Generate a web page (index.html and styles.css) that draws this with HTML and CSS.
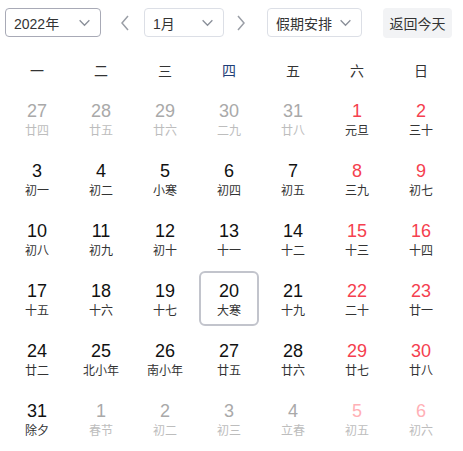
FILE: index.html
```html
<!DOCTYPE html>
<html lang="zh-CN">
<head>
    <meta charset="UTF-8">
    <title>万年历</title>
    <link rel="stylesheet" href="styles.css">
</head>
<body>
    <div class="toolbar">
        <div class="select select-year active">
            <span>2022年</span>
            <svg class="caret" viewBox="0 0 12 12"><path d="M1.5 4l4.5 4.5 4.5-4.5" /></svg>
        </div>
        <svg class="nav nav-prev" viewBox="0 0 14 18"><path d="M10 2L4 9l6 7" /></svg>
        <div class="select select-month">
            <span>1月</span>
            <svg class="caret" viewBox="0 0 12 12"><path d="M1.5 4l4.5 4.5 4.5-4.5" /></svg>
        </div>
        <svg class="nav nav-next" viewBox="0 0 14 18"><path d="M4 2l6 7-6 7" /></svg>
        <div class="select select-holiday">
            <span>假期安排</span>
            <svg class="caret" viewBox="0 0 12 12"><path d="M1.5 4l4.5 4.5 4.5-4.5" /></svg>
        </div>
        <button class="today-btn">返回今天</button>
    </div>

    <div class="weekdays">
        <div>一</div>
        <div>二</div>
        <div>三</div>
        <div class="current">四</div>
        <div>五</div>
        <div>六</div>
        <div>日</div>
    </div>

    <div id="days" class="days"></div>

    <script>
        const days = [
            [27, "廿四", "other"], [28, "廿五", "other"], [29, "廿六", "other"], [30, "二九", "other"], [31, "廿八", "other"], [1, "元旦", "rest"], [2, "三十", "rest"],
            [3, "初一"], [4, "初二"], [5, "小寒"], [6, "初四"], [7, "初五"], [8, "三九", "rest"], [9, "初七", "rest"],
            [10, "初八"], [11, "初九"], [12, "初十"], [13, "十一"], [14, "十二"], [15, "十三", "rest"], [16, "十四", "rest"],
            [17, "十五"], [18, "十六"], [19, "十七"], [20, "大寒", "today"], [21, "十九"], [22, "二十", "rest"], [23, "廿一", "rest"],
            [24, "廿二"], [25, "北小年"], [26, "南小年"], [27, "廿五"], [28, "廿六"], [29, "廿七", "rest"], [30, "廿八", "rest"],
            [31, "除夕"], [1, "春节", "other"], [2, "初二", "other"], [3, "初三", "other"], [4, "立春", "other"], [5, "初五", "other rest"], [6, "初六", "other rest"]
        ];

        const grid = document.getElementById("days");
        days.forEach(([num, lunar, cls]) => {
            const cell = document.createElement("div");
            cell.className = "day" + (cls ? " " + cls : "");
            cell.innerHTML = `<span class="num">${num}</span><span class="lunar">${lunar}</span>`;
            grid.appendChild(cell);
        });
    </script>
</body>
</html>
```

FILE: styles.css
```css
body {
    margin: 0;
    font-family: "Liberation Sans", "Noto Sans CJK SC", sans-serif;
    color: #1d2129;
    background: #fff;
}

.toolbar {
    display: flex;
    align-items: center;
    padding: 8px 0 0 5px;
    height: 29px;
}

.select {
    box-sizing: border-box;
    height: 29px;
    border: 1px solid #dcdfe6;
    border-radius: 4px;
    display: flex;
    align-items: center;
    justify-content: space-between;
    padding: 0 9px 0 8px;
    font-size: 14px;
    color: #333;
}

.select.active {
    border-color: #a8aab6;
}

.select-year {
    width: 96px;
}

.select-month {
    width: 80px;
}

.select-holiday {
    width: 95px;
}

.caret {
    width: 13px;
    height: 13px;
    fill: none;
    stroke: #8a8f99;
    stroke-width: 1.2;
}

.nav {
    width: 14px;
    height: 18px;
    fill: none;
    stroke: #9a9ea6;
    stroke-width: 1.5;
}

.nav-prev {
    margin: 0 12px 0 17px;
}

.nav-next {
    margin: 0 19px 0 10px;
}

.today-btn {
    margin-left: 21px;
    height: 30px;
    width: 69px;
    border: none;
    border-radius: 4px;
    background: #f2f3f5;
    font-family: inherit;
    font-size: 14px;
    color: #333;
    padding: 0;
}

.weekdays {
    display: grid;
    grid-template-columns: repeat(7, 64px);
    margin: 24px 0 0 5px;
    font-size: 14px;
    line-height: 20px;
    text-align: center;
    color: #333;
}

.weekdays .current {
    color: #1f3f78;
}

.days {
    display: grid;
    grid-template-columns: repeat(7, 64px);
    grid-auto-rows: 55px;
    row-gap: 5px;
    margin: 10px 0 0 5px;
}

.day {
    margin: 0 2px;
    box-sizing: border-box;
    border: 2px solid transparent;
    border-radius: 6px;
    display: flex;
    flex-direction: column;
    align-items: center;
    padding-top: 7px;
}

.day.today {
    border-color: #c2c4cc;
}

.num {
    font-size: 18px;
    line-height: 22px;
    color: #111;
}

.lunar {
    font-size: 12px;
    line-height: 16px;
    margin-top: 1px;
    color: #333;
}

.rest .num {
    color: #f53f4f;
}

.other .num {
    color: #a9a9a9;
}

.other .lunar {
    color: #bdbdbd;
}

.other.rest .num {
    color: #ffb0b6;
}
```
